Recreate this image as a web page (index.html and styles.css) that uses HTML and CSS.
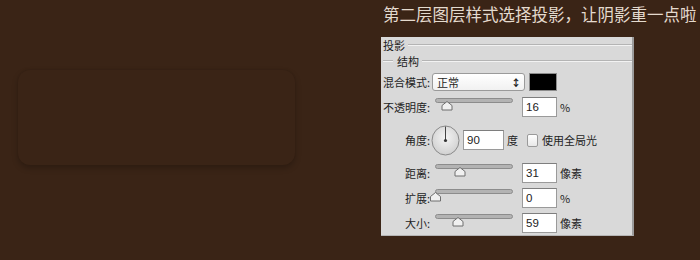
FILE: index.html
```html
<!DOCTYPE html>
<html lang="zh-CN">
<head>
    <meta charset="UTF-8">
    <meta name="viewport" content="width=device-width, initial-scale=1.0">
    <title>投影</title>
    <link rel="stylesheet" href="styles.css">
</head>
<body>
    <div class="page">
        <div class="preview">
            <div class="card"></div>
        </div>
        <div class="side">
            <h1 class="caption">第二层图层样式选择投影，让阴影重一点啦</h1>
            <div class="dialog">
                <div class="legend legend-main">投影</div>
                <div class="legend legend-sub">结构</div>

                <div class="row row-blend">
                    <span class="label">混合模式:</span>
                    <div class="select"><span>正常</span><span class="arrows">&#x2195;</span></div>
                    <div class="swatch"></div>
                </div>

                <div class="row row-slider">
                    <span class="label">不透明度:</span>
                    <svg class="slider" width="87" height="18" viewBox="0 0 87 18">
                        <rect x="5.5" y="0.5" width="77" height="4" rx="2" fill="#b3b3b3" stroke="#8c8c8c"/>
                        <path d="M12 12 V7.5 L17 3.5 L22 7.5 V12 Z" fill="#f0f0f0" stroke="#6e6e6e" stroke-linejoin="round"/>
                    </svg>
                    <div class="field">16</div>
                    <span class="unit">%</span>
                </div>

                <div class="row row-angle">
                    <span class="label">角度:</span>
                    <svg class="dial" width="29" height="31" viewBox="0 0 29 31">
                        <defs>
                            <radialGradient id="dialFill" cx="0.5" cy="0.4" r="0.6">
                                <stop offset="0" stop-color="#f4f4f4"/>
                                <stop offset="1" stop-color="#d0d0d0"/>
                            </radialGradient>
                        </defs>
                        <ellipse cx="14.5" cy="15.5" rx="13.5" ry="14.5" fill="url(#dialFill)" stroke="#8a8a8a"/>
                        <line x1="14.5" y1="15.5" x2="14.5" y2="1.5" stroke="#444" stroke-width="1"/>
                        <circle cx="14.5" cy="15.5" r="1.6" fill="#333"/>
                    </svg>
                    <div class="field field-wide">90</div>
                    <span class="unit">度</span>
                    <span class="check"></span>
                    <span class="check-text">使用全局光</span>
                </div>

                <div class="row row-slider row-indent row-first">
                    <span class="label">距离:</span>
                    <svg class="slider" width="87" height="18" viewBox="0 0 87 18">
                        <rect x="5.5" y="0.5" width="77" height="4" rx="2" fill="#b3b3b3" stroke="#8c8c8c"/>
                        <path d="M25 12 V7.5 L30 3.5 L35 7.5 V12 Z" fill="#f0f0f0" stroke="#6e6e6e" stroke-linejoin="round"/>
                    </svg>
                    <div class="field">31</div>
                    <span class="unit">像素</span>
                </div>

                <div class="row row-slider row-indent">
                    <span class="label">扩展:</span>
                    <svg class="slider" width="87" height="18" viewBox="0 0 87 18">
                        <rect x="5.5" y="0.5" width="77" height="4" rx="2" fill="#b3b3b3" stroke="#8c8c8c"/>
                        <path d="M0.5 12 V7.5 L5.5 3.5 L10.5 7.5 V12 Z" fill="#f0f0f0" stroke="#6e6e6e" stroke-linejoin="round"/>
                    </svg>
                    <div class="field">0</div>
                    <span class="unit">%</span>
                </div>

                <div class="row row-slider row-indent">
                    <span class="label">大小:</span>
                    <svg class="slider" width="87" height="18" viewBox="0 0 87 18">
                        <rect x="5.5" y="0.5" width="77" height="4" rx="2" fill="#b3b3b3" stroke="#8c8c8c"/>
                        <path d="M23 12 V7.5 L28 3.5 L33 7.5 V12 Z" fill="#f0f0f0" stroke="#6e6e6e" stroke-linejoin="round"/>
                    </svg>
                    <div class="field">59</div>
                    <span class="unit">像素</span>
                </div>
            </div>
        </div>
    </div>
</body>
</html>
```

FILE: styles.css
```css
body {
    margin: 0;
    padding: 0;
    background-color: #3a2416;
    font-family: "Noto Sans CJK SC", "Noto Sans", sans-serif;
    overflow: hidden;
}
.page {
    display: flex;
    width: 700px;
    height: 260px;
}
.preview {
    width: 381px;
    flex-shrink: 0;
    padding: 70px 0 0 18px;
    box-sizing: border-box;
}
.card {
    width: 277px;
    height: 95px;
    background-color: #3a2416;
    border-radius: 12px;
    box-shadow: 0 3px 6px rgba(0, 0, 0, 0.24), 0 -1px 2px rgba(0, 0, 0, 0.06);
}
.side {
    flex: 1;
}
.caption {
    margin: 0 0 9px 2px;
    font-size: 16.5px;
    font-weight: normal;
    line-height: 28px;
    color: #e4dace;
    white-space: nowrap;
}
.dialog {
    width: 251px;
    height: 198px;
    background-color: #d9d9d9;
    border-right: 2px solid #9c9c9c;
    border-bottom: 1px solid #b5b5b5;
    font-size: 11px;
    color: #1e1e1e;
}
.legend {
    display: flex;
    align-items: center;
    height: 16px;
    line-height: 16px;
}
.legend::after {
    content: "";
    flex: 1;
    border-top: 1px solid #b4b4b4;
    border-bottom: 1px solid #f2f2f2;
    margin-left: 3px;
}
.legend-main {
    padding-left: 2px;
}
.legend-sub::before {
    content: "";
    width: 10px;
    border-top: 1px solid #b4b4b4;
    border-bottom: 1px solid #f2f2f2;
    margin: 0 4px 0 2px;
}
.row {
    display: flex;
    align-items: center;
    height: 20px;
    padding-left: 2px;
    white-space: nowrap;
}
.row > * {
    flex-shrink: 0;
}
.row-blend {
    height: 26px;
}
.row-blend .label {
    width: 49px;
}
.select {
    width: 84px;
    height: 16px;
    background: linear-gradient(#ffffff, #f1f1f1);
    border: 1px solid #9a9a9a;
    border-radius: 3px;
    display: flex;
    align-items: center;
    justify-content: space-between;
    padding: 0 3px 0 4px;
}
.arrows {
    font-size: 10px;
    font-weight: bold;
}
.swatch {
    width: 26px;
    height: 16px;
    margin-left: 4px;
    background-color: #000;
    border: 1px solid #8c8c8c;
}
.row-slider {
    margin-top: 2px;
}
.row-slider .label {
    width: 47px;
}
.row-indent {
    padding-left: 24px;
    margin-top: 5px;
}
.row-indent.row-first {
    margin-top: 3px;
}
.row-indent .label {
    width: 25px;
}
.slider {
    display: block;
    overflow: visible;
}
.field {
    width: 30px;
    height: 18px;
    margin-left: 5px;
    padding-left: 3px;
    background-color: #fff;
    border: 1px solid #9a9a9a;
    border-top-color: #7e7e7e;
    font-family: "Liberation Sans", Arial, sans-serif;
    font-size: 11.5px;
    line-height: 19px;
    color: #222;
}
.unit {
    margin-left: 3px;
}
.row-angle {
    height: 40px;
    margin-top: 3px;
    padding-left: 24px;
}
.row-angle .label {
    width: 26px;
}
.dial {
    display: block;
}
.field-wide {
    width: 36px;
    margin-left: 3px;
    height: 18px;
}
.check {
    width: 9px;
    height: 11px;
    margin-left: 9px;
    border: 1px solid #9a9a9a;
    border-radius: 2px;
    background: linear-gradient(#ffffff, #e8e8e8);
}
.check-text {
    margin-left: 4px;
}
```
